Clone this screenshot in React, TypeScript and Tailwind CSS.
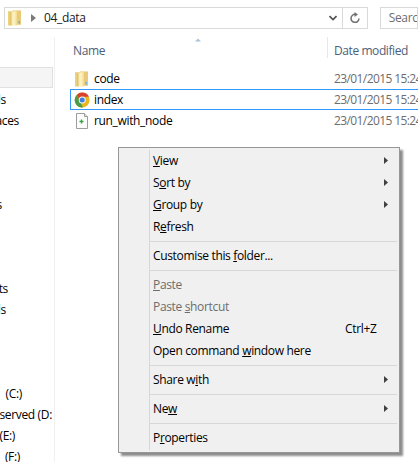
import React from "react";

function Folder() {
  return (
    <svg width="16" height="16" viewBox="0 0 16 16">
      <defs>
        <linearGradient id="fp" x1="0" y1="0" x2="1" y2="0">
          <stop offset="0" stopColor="#f8e6a0" />
          <stop offset="0.5" stopColor="#fdf4c6" />
          <stop offset="1" stopColor="#f3d98a" />
        </linearGradient>
      </defs>
      <path d="M1 1.5 H5 L6 .5 H14 V14.5 H1 Z" fill="#e6c46a" />
      <path d="M1 1.5 H4 V15.5 H1 Z" fill="#ecd07e" />
      <path d="M4 2 L10 .5 V15.5 H4 Z" fill="url(#fp)" />
      <path d="M10 1 H14 V14.5 H10 Z" fill="#e9ca78" />
      <path d="M11.5 11 H13 V13.5 H11.5 Z" fill="#6fb4d8" />
      <path d="M4 2 V15.5" stroke="#cfa851" strokeWidth="0.6" />
    </svg>
  );
}

function Chrome() {
  return (
    <svg width="16" height="16" viewBox="0 0 16 16">
      <circle cx="8.2" cy="8" r="7.4" fill="#e8b820" />
      <path d="M8.2 .6 A7.4 7.4 0 0 1 14.9 4.8 H8.2 A3.3 3.3 0 0 0 5 7.1 L2.7 3 A7.4 7.4 0 0 1 8.2 .6Z" fill="#d8432f" />
      <path d="M2.7 3 L6.2 9.8 L9 15.4 A7.4 7.4 0 0 1 2.7 3Z" fill="#4a9c45" />
      <circle cx="8.2" cy="8" r="3.5" fill="#f4f4f4" />
      <circle cx="8.2" cy="8" r="2.5" fill="#3f7fe0" />
    </svg>
  );
}

function ScriptFile() {
  return (
    <svg width="16" height="16" viewBox="0 0 16 16">
      <path d="M2.5 .5 H10.5 L13.5 3.5 V15.5 H2.5 Z" fill="#fcfcfc" stroke="#9c9c9c" />
      <path d="M10.5 .5 V3.5 H13.5" fill="#e8e8e8" stroke="#9c9c9c" />
      <path d="M5.5 8.5 H9.5 M7.5 6.5 V10.5" stroke="#35a544" strokeWidth="1.4" />
    </svg>
  );
}

function Arrow() {
  return (
    <svg width="4" height="7" viewBox="0 0 4 7" className="absolute right-[11px] top-[7px]">
      <path d="M0 0 L4 3.5 L0 7 Z" fill="#404040" />
    </svg>
  );
}

function Item({ children, disabled, arrow, shortcut }: { children: React.ReactNode; disabled?: boolean; arrow?: boolean; shortcut?: string }) {
  return (
    <div className={`relative h-[22px] flex items-center pl-[34px] whitespace-nowrap ${disabled ? "text-[#6d6d6d]" : "text-black"}`}>
      <span className="leading-[22px]">{children}</span>
      {shortcut && <span className="absolute left-[226px] top-0 leading-[22px]">{shortcut}</span>}
      {arrow && <Arrow />}
    </div>
  );
}

function Sep() {
  return (
    <div className="h-[7px] flex items-start pt-[3px] pl-[31px] pr-[2px]">
      <div className="h-px w-full bg-[#d7d7d7]" />
    </div>
  );
}

function Side({ w, text, gap }: { w: string; text: string; gap?: string }) {
  return (
    <div className={`h-[21px] leading-[21px] flex justify-end whitespace-nowrap text-black ${w} ${gap ?? ""}`}>
      {text}
    </div>
  );
}

function Row({ icon, name, active }: { icon: React.ReactNode; name: string; active?: boolean }) {
  return (
    <div className={`h-[21px] flex items-center border ${active ? "border-[#3399ff]" : "border-transparent"}`}>
      <div className="w-[3px]" />
      <div className="w-[16px] h-[16px] mr-[4px]">{icon}</div>
      <div className="w-[240px] text-black leading-[19px]">{name}</div>
      <div className="text-[#6d6d6d] whitespace-nowrap leading-[19px] tracking-[-0.6px]">23/01/2015 15:24</div>
    </div>
  );
}

export default function App() {
  return (
    <div className="relative w-[418px] h-[462px] overflow-hidden bg-white text-[12px] font-['Open_Sans','Noto_Sans',sans-serif] tracking-[-0.34px]">
      <div className="h-[37px] flex items-start pt-[7px] pl-[4px]">
        <div className="w-[385px] h-[22px] border border-[#d9d9d9] flex items-center">
          <div className="ml-[2px]"><Folder /></div>
          <svg width="5" height="8" viewBox="0 0 5 8" className="ml-[8px]"><path d="M0 0 L5 4 L0 8 Z" fill="#7a7a7a" /></svg>
          <span className="ml-[8px] text-[#202020]">04_data</span>
          <div className="flex-1" />
          <svg width="8" height="6" viewBox="0 0 8 6" className="mr-[5px]"><path d="M.5 1 L4 4.5 L7.5 1" fill="none" stroke="#505050" strokeWidth="1.6" /></svg>
          <div className="w-[25px] h-full border-l border-[#d9d9d9] flex items-center justify-center">
            <svg width="12" height="12" viewBox="0 0 12 12">
              <path d="M6.5 2.4 A4 4 0 1 0 10 6.5" fill="none" stroke="#707070" strokeWidth="1.5" />
              <path d="M5.5 0 L9 2.5 L5.5 5 Z" fill="#707070" />
            </svg>
          </div>
        </div>
        <div className="ml-[12px] w-[40px] h-[22px] border border-[#d9d9d9] pl-[8px] leading-[20px] text-[#6d6d6d] overflow-hidden">Search</div>
      </div>

      <div className="flex h-[425px]">
        <div className="w-[55px] shrink-0 border-r border-[#f0f0f0] overflow-hidden">
          <div className="mt-[30px] h-[21px] w-[53px] bg-[#f5f5f5] border border-[#e0e0e0] border-l-0" />
          <div className="mt-[1px]" />
          <Side w="w-[6px]" text="Downloads" />
          <Side w="w-[19px]" text="Recent places" />
          <Side w="w-[2px]" text="Videos" gap="mt-[63px]" />
          <Side w="w-[8px]" text="Documents" gap="mt-[63px]" />
          <Side w="w-[6px]" text="Downloads" />
          <Side w="w-[22px]" text="(C:)" gap="mt-[63px]" />
          <Side w="w-[52px]" text="System Reserved (D:" />
          <Side w="w-[15px]" text="(E:)" />
          <Side w="w-[20px]" text="(F:)" />
        </div>
        <div className="flex-1 min-w-0 overflow-hidden">
          <div className="relative h-[31px] flex">
            <svg width="6" height="4" viewBox="0 0 6 4" className="absolute left-[140px] top-[1px]"><path d="M0 3.5 L3 .5 L6 3.5 Z" fill="#a9c4dc" /></svg>
            <div className="w-[273px] h-[21px] pl-[18px] pt-[5px] leading-[17px] text-[#4c607a] border-r border-[#e3e8ef]">Name</div>
            <div className="pl-[6px] pt-[5px] leading-[17px] text-[#4c607a] whitespace-nowrap tracking-[-0.42px]">Date modified</div>
          </div>
          <div className="pl-[15px] w-[400px]">
            <Row icon={<Folder />} name="code" />
            <Row icon={<Chrome />} name="index" active />
            <Row icon={<ScriptFile />} name="run_with_node" />
          </div>
        </div>
      </div>

      <div className="absolute left-[118px] top-[147px] w-[282px] h-[306px] bg-[#f0f0f0] border border-[#979797] pt-[2px] shadow-[3px_3px_2px_rgba(0,0,0,0.45)]">
        <div className="absolute left-[30px] top-[2px] bottom-[2px] w-px bg-[#d7d7d7]" />
        <Item arrow><u>V</u>iew</Item>
        <Item arrow>S<u>o</u>rt by</Item>
        <Item arrow><u>G</u>roup by</Item>
        <Item>R<u>e</u>fresh</Item>
        <Sep />
        <Item>Customise this <u>f</u>older...</Item>
        <Sep />
        <Item disabled><u>P</u>aste</Item>
        <Item disabled>Paste <u>s</u>hortcut</Item>
        <Item shortcut="Ctrl+Z"><u>U</u>ndo Rename</Item>
        <Item>Open command <u>w</u>indow here</Item>
        <Sep />
        <Item arrow>Share w<u>i</u>th</Item>
        <Sep />
        <Item arrow>Ne<u>w</u></Item>
        <Sep />
        <Item>P<u>r</u>operties</Item>
      </div>
    </div>
  );
}
